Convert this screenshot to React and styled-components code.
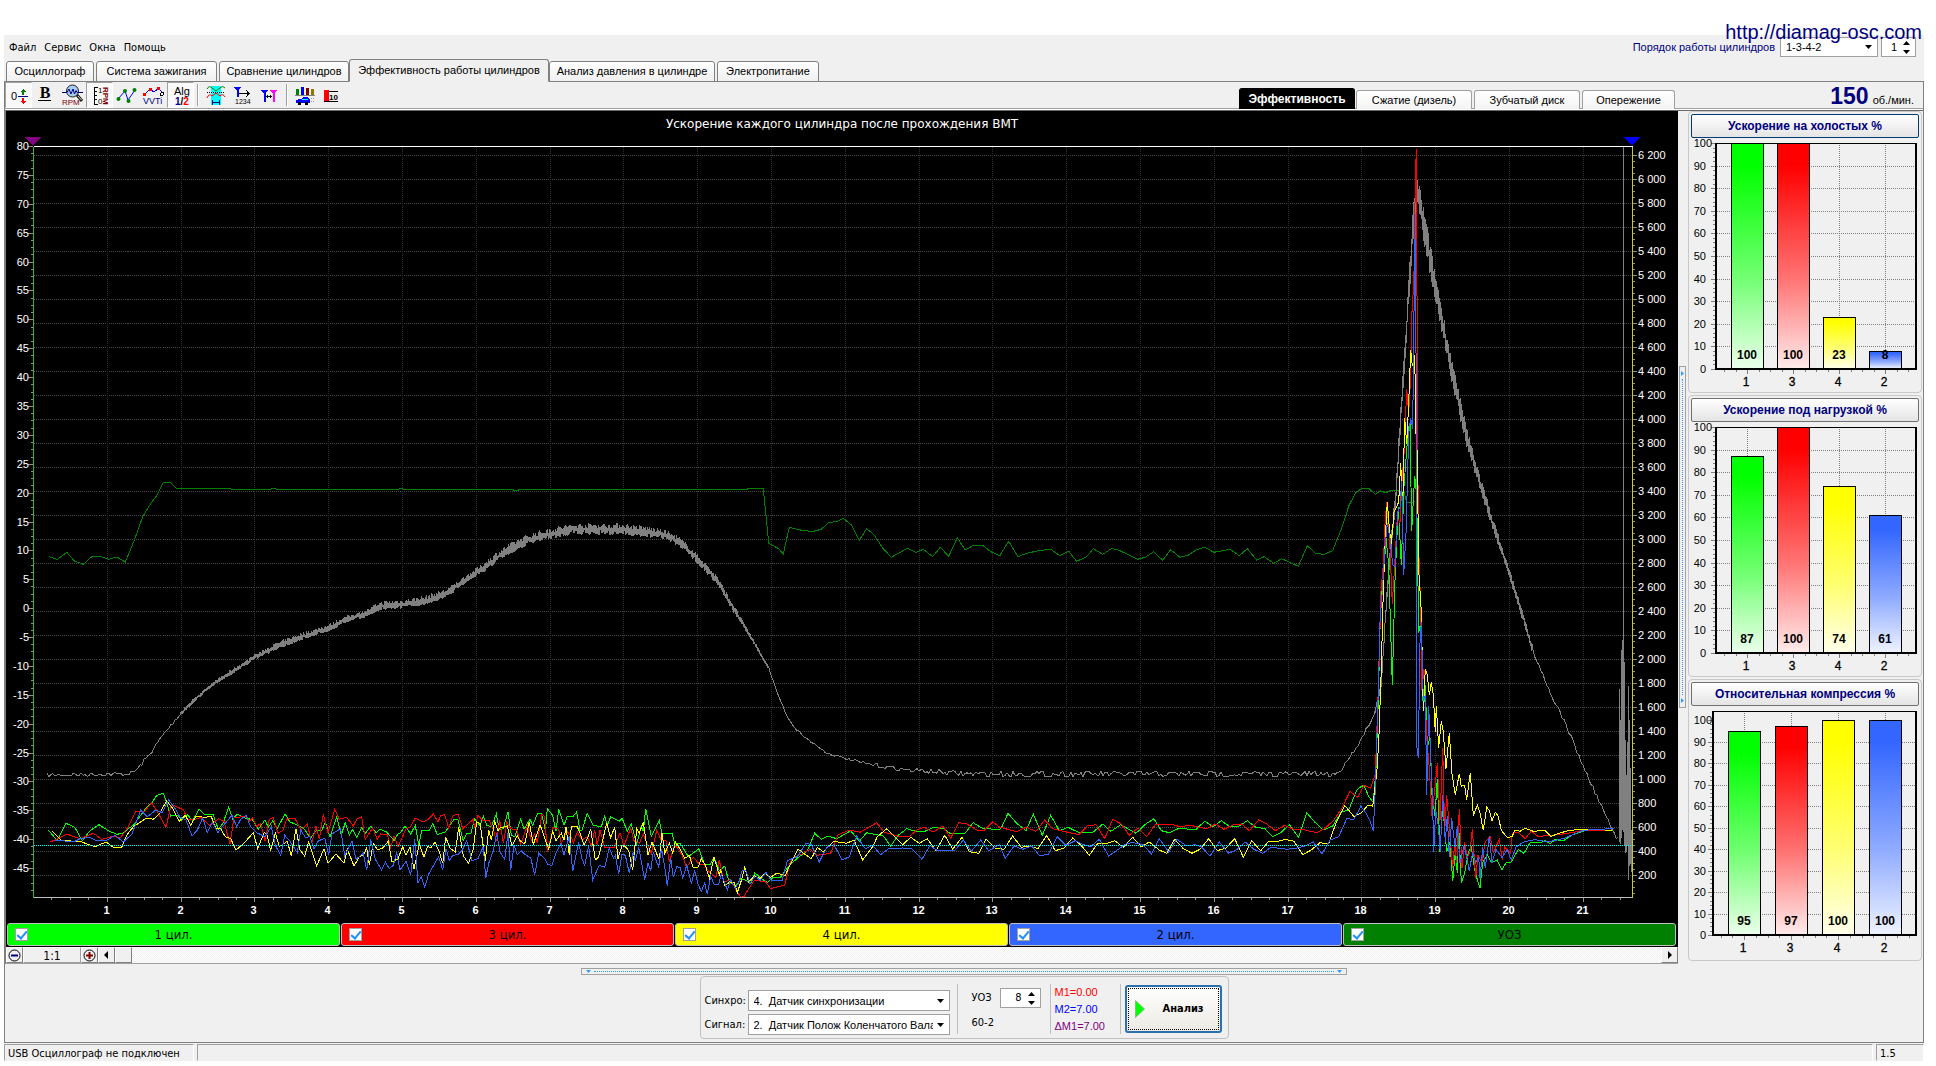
import React from "react";
import styled, { createGlobalStyle, css } from "styled-components";

const sans = `"Liberation Sans", Arial, sans-serif`;
const ui = `"DejaVu Sans Condensed", "DejaVu Sans", sans-serif`;

const GlobalStyle = createGlobalStyle`
  * { box-sizing: border-box; }
  body {
    margin: 0;
    background: #fff;
    color: #000;
    font: 11px/14px ${sans};
  }
  button, input, select { font: inherit; color: inherit; margin: 0; }
`;

const Window = styled.div`
  position: relative;
  margin: 35px 12px 0 4px;
  background: #f0f0f0;
`;

const SiteLink = styled.a`
  position: absolute;
  top: -15px;
  right: 2px;
  z-index: 2;
  color: #000080;
  font-size: 20px;
  line-height: 24px;
  text-decoration: none;
`;

const Header = styled.header`
  display: flex;
  justify-content: space-between;
  height: 47px;
  box-shadow: inset 0 -1px #808080;
`;

const Menu = styled.nav`
  display: flex;
  gap: 8px;
  height: 24px;
  padding: 4px 5px 2px;
  font: 11px/14px ${ui};
`;

const MenuItem = styled.button`
  padding: 0;
  border: 0;
  background: none;
`;

const Tabs = styled.div`
  display: flex;
  align-items: flex-end;
  height: 23px;
  padding-left: 2px;
`;

const Tab = styled.button`
  width: ${(p) => p.$w}px;
  height: ${(p) => (p.$active ? 23 : 21)}px;
  margin-right: ${(p) => (p.$flush ? 0 : 2)}px;
  padding: 0 0 1px;
  white-space: nowrap;
  border: 1px solid #808080;
  border-radius: 3px 3px 0 0;
  background: linear-gradient(#fff, #f0f0f0);
  ${(p) =>
    p.$active &&
    css`
      border-bottom-color: #f0f0f0;
      background: #f0f0f0;
    `}
`;

const OrderBar = styled.div`
  display: flex;
  gap: 3px;
  padding: 2px 8px 0 0;
  color: #000080;
`;

const OrderLabel = styled.label`
  padding: 3px 2px 0 0;
`;

const SelectWrap = styled.span`
  position: relative;
  display: block;
  width: ${(p) => p.$w}px;
  height: ${(p) => p.$h}px;

  select {
    width: 100%;
    height: 100%;
    padding: 0 16px 0 5px;
    border: 1px solid #a0a0a0;
    border-radius: 0;
    background: #fff;
    color: #000;
    appearance: none;
    white-space: pre;
  }
  svg {
    position: absolute;
    right: 6px;
    top: 50%;
    margin-top: -2px;
    color: #000;
    pointer-events: none;
  }
`;

const SpinWrap = styled.span`
  display: flex;
  align-items: center;
  width: ${(p) => p.$w}px;
  height: ${(p) => p.$h}px;
  padding-right: 5px;
  border: 1px solid #a0a0a0;
  background: #fff;

  input {
    flex: 1;
    width: 0;
    padding: 0 6px 0 0;
    border: 0;
    background: none;
    color: #000;
    text-align: right;
    outline: 0;
  }
`;

const Pane = styled.main`
  border: solid #808080;
  border-width: 0 1px 1px;
`;

const Toolbar = styled.div`
  display: flex;
  height: 29px;
  border-bottom: 1px solid #696969;
  box-shadow: inset 0 -1px #fff, inset 0 -2px #a0a0a0;
`;

const Tool = styled.button`
  width: 27px;
  height: 26px;
  padding: 0;
  border: 1px solid transparent;
  background: none;
  line-height: 0;
  ${(p) =>
    p.$on &&
    css`
      border-color: #a0a0a0 #fff #fff #a0a0a0;
      background: #f9f9f9;
    `}
`;

const ToolSep = styled.i`
  width: 2px;
  height: 22px;
  margin: 2px 3px 0;
  border-left: 1px solid #a0a0a0;
  border-right: 1px solid #fff;
`;

const ViewTabs = styled.div`
  display: flex;
  align-items: flex-end;
  height: 27px;
  margin-left: auto;
`;

const ViewTab = styled.button`
  width: ${(p) => p.$w}px;
  height: 19px;
  margin-left: 2px;
  padding: 0;
  border: 1px solid #a0a0a0;
  border-bottom: 0;
  border-radius: 3px 3px 0 0;
  background: linear-gradient(#fff, #f4f4f4);
  ${(p) =>
    p.$active &&
    css`
      height: 21px;
      margin-right: -1px;
      background: #000;
      border-color: #000;
      color: #fff;
      font-size: 12px;
      font-weight: bold;
    `}
`;

const Rpm = styled.div`
  display: flex;
  justify-content: flex-end;
  align-items: baseline;
  gap: 4px;
  width: 248px;
  padding: 2px 9px 0 0;
  font: 11px/24px ${sans};

  strong {
    color: #000080;
    font-size: 23px;
  }
`;

const Body = styled.div`
  display: grid;
  grid-template-columns: minmax(0, 1fr) 9px 236px;
`;

const Scope = styled.section`
  border-left: 1px solid #808080;
  background: #000;
`;

const ChartSvg = styled.svg`
  display: block;
  width: 100%;
  height: auto;
  overflow: visible;
  font-family: ${sans};
`;

const Legend = styled.div`
  display: grid;
  grid-template-columns: repeat(5, 1fr);
  gap: 1px;
  padding: 1px 2px 1px 1px;
`;

const LegendItem = styled.label`
  display: flex;
  align-items: center;
  height: 23px;
  padding-left: 7px;
  border: 1px solid #c0c0c0;
  border-radius: 3px;
  background: ${(p) => p.$color};
  font: 13px/20px ${ui};

  span {
    flex: 1;
    padding-right: 20px;
    text-align: center;
  }
`;

const Check = styled.input`
  appearance: none;
  display: grid;
  place-items: center;
  width: 13px;
  height: 13px;
  border: 1px solid #a0a0a0;
  background: #fff;

  &:checked::after {
    content: "";
    width: 4px;
    height: 8px;
    margin-bottom: 2px;
    border: solid #1e8fff;
    border-width: 0 2px 2px 0;
    transform: rotate(40deg);
  }
`;

const ScrollRow = styled.div`
  display: flex;
  height: 17px;
  border-bottom: 1px solid #a0a0a0;
  background: #f0f0f0;
`;

const ScrollButton = styled.button`
  width: 17px;
  padding: 0;
  border: 1px solid;
  border-color: #fff #808080 #808080 #fff;
  background: #f0f0f0;
  line-height: 0;
`;

const Ratio = styled.output`
  width: 58px;
  border: 1px solid;
  border-color: #fff #a0a0a0 #a0a0a0 #fff;
  text-align: center;
  font: 12px/17px ${ui};
`;

const ScrollTrack = styled.div`
  flex: 1;
  background: repeating-conic-gradient(#f0f0f0 0 25%, #fff 0 50%) 0 0 / 2px 2px;
`;

const Grip = styled.div`
  display: flex;
  align-items: center;
  justify-content: space-between;
  border: 1px solid #a0a0a0;
  color: #3399ff;
  ${(p) =>
    p.$vertical
      ? css`
          flex-direction: column;
          align-self: start;
          width: 7px;
          height: 342px;
          margin: 255px 1px 0;
          padding: 4px 0;
        `
      : css`
          width: 766px;
          height: 7px;
          padding: 0 4px;
        `}

  i {
    flex: 1;
    margin: 3px;
    border: 0 dotted #3399ff;
    ${(p) => (p.$vertical ? "border-left-width: 1px;" : "border-top-width: 1px;")}
  }
`;

const Side = styled.aside`
  display: flex;
  flex-direction: column;
  gap: 2px;
  padding: 0 1px;
`;

const Card = styled.section`
  height: 282px;
  padding: 2px;
  border: 1px solid #c8c8c8;
  border-radius: 4px;
`;

const CardTitle = styled.button`
  display: block;
  width: 100%;
  height: 24px;
  padding: 0;
  border: 1px solid ${(p) => (p.$focus ? "#003c74" : "#707070")};
  border-radius: 2px;
  background: linear-gradient(#fff, #e4e4e4);
  color: #000080;
  font-size: 12px;
  font-weight: bold;
`;

const Bottom = styled.div`
  display: flex;
  flex-direction: column;
  align-items: center;
  gap: 1px;
  padding: 4px 0 3px;
`;

const Controls = styled.div`
  display: flex;
  align-items: flex-start;
  height: 63px;
  padding: 7px 6px 0 4px;
  border: 1px solid #c0c0c0;
  border-radius: 4px;
  font: 11px/14px ${ui};
`;

const Fields = styled.div`
  display: grid;
  grid-template-columns: 42px 202px;
  gap: 3px 1px;
  align-items: center;
  margin-top: 6px;

  select { font: 11px/14px ${sans}; }
`;

const Advance = styled.div`
  display: grid;
  grid-template-columns: 28px 42px;
  gap: 8px 0;
  align-items: center;
  height: 50px;
  margin-left: 7px;
  padding: 4px 8px 4px 14px;
  border-left: 1px solid #c0c0c0;
  border-right: 1px solid #c0c0c0;
`;

const Marks = styled.div`
  height: 50px;
  width: 70px;
  padding: 0 4px;
  border-right: 1px solid #c0c0c0;
  font: 11px/17px ${sans};
`;

const Mark = styled.div`
  color: ${(p) => p.$color};
  white-space: nowrap;
`;

const Analyze = styled.button`
  display: flex;
  align-items: center;
  gap: 18px;
  width: 97px;
  height: 48px;
  margin: 1px 0 0 4px;
  padding: 0 8px;
  border: 2px solid #2a6fae;
  border-radius: 3px;
  outline: 1px dotted #000;
  outline-offset: -4px;
  background: linear-gradient(#fff, #eceae2);
  font: bold 11px/14px ${ui};
`;

const StatusBar = styled.footer`
  display: grid;
  grid-template-columns: 190px 1fr 48px;
  gap: 3px;
  padding-top: 1px;
  font: 11px/15px ${ui};
`;

const StatusCell = styled.div`
  height: 17px;
  padding: 1px 3px;
  border: 1px solid;
  border-color: #a0a0a0 #fff transparent #a0a0a0;
`;

// ---------- traces ----------

// Samples are kept at three units per pixel, in blocks of 1500 units.
const parse = (text, block) =>
  text
    .trim()
    .split(/\s+/)
    .map((p) => p.split(",").map(Number))
    .map(([x, y]) => [x / 3 + block * 500, y / 3 + 460]);

// The acceleration burst has its own, coarser vertical scale.
const parseBurst = (text) =>
  text
    .trim()
    .split(/\s+/)
    .map((p) => p.split(",").map(Number))
    .map(([x, y]) => [x / 3 + 1300, y / 1.912 + 120]);

const join = (a, b, c, burst) => [...parse(a, 0), ...parse(b, 1), ...parse(c, 2), ...parseBurst(burst)];

const cyl1 = join(
  `145,1110 172,1142 198,1090 224,1102 247,1142 270,1112 297,1094 325,1112 350,1123 368,1120 385,1106 402,1094 420,1068 442,1040 456,1028 470,1006 490,1000 498,1022 512,1068 532,1066 545,1080 562,1064 578,1082 597,1048 612,1062 640,1064 655,1108 670,1088 686,1040 698,1078 712,1062 740,1076 757,1078 775,1108 795,1080 805,1102 818,1082 832,1105 855,1062 870,1086 890,1094 910,1104 932,1134 950,1110 965,1112 976,1086 990,1130 1010,1072 1024,1124 1036,1088 1048,1126 1058,1108 1070,1132 1085,1104 1096,1120 1113,1098 1128,1118 1140,1108 1160,1116 1182,1142 1194,1122 1202,1118 1215,1098 1232,1122 1246,1096 1256,1156 1265,1112 1288,1112 1298,1090 1312,1124 1336,1116 1362,1078 1374,1080 1390,1142 1400,1120 1412,1122 1424,1076 1440,1098 1450,1068 1460,1096 1474,1100 1489,1062 1498,1110`,
  `10,1105 24,1056 34,1126 44,1130 62,1078 72,1108 90,1078 98,1096 112,1062 124,1060 134,1100 136,1115 142,1046 158,1066 168,1114 176,1048 192,1096 202,1068 220,1068 230,1056 240,1112 246,1110 262,1060 280,1096 304,1100 314,1068 322,1096 332,1070 360,1084 366,1074 382,1114 394,1092 410,1152 424,1098 430,1114 437,1046 454,1130 478,1082 486,1120 516,1120 524,1150 540,1150 550,1165 565,1190 596,1166 614,1214 632,1212 642,1192 658,1232 674,1218 686,1262 706,1280 722,1256 740,1262 752,1272 764,1238 780,1252 802,1268 820,1252 840,1254 856,1232 872,1212 900,1188 922,1172 944,1120 964,1138 985,1128 1010,1136 1052,1112 1078,1144 1100,1118 1150,1128 1172,1158 1195,1126 1220,1106 1248,1114 1275,1114 1300,1102 1330,1106 1350,1120 1395,1120 1420,1088 1445,1104 1498,1110`,
  `4,1104 24,1060 50,1090 78,1112 100,1062 127,1126 152,1066 178,1112 204,1102 235,1117 280,1116 308,1092 332,1114 362,1094 408,1120 434,1094 462,1076 484,1112 508,1118 535,1106 588,1108 614,1084 640,1100 664,1082 690,1100 715,1100 742,1082 768,1102 795,1106 818,1130 842,1118 868,1094 896,1132 920,1058 944,1086 970,1110 998,1098 1024,1056 1046,1050 1070,990 1080,982`,
  `182,1275 192,1272 205,1292 220,1305 228,1240 235,1110 242,920 250,880 258,800 266,850 277,1080 285,880 295,740 304,850 312,700 325,590 330,580 335,785 344,680 350,720 356,980 362,960 370,1130 376,1080 382,1200 390,1180 396,1290 405,1330 412,1260 420,1400 428,1310 440,1400 450,1380 458,1455 466,1400 472,1440 476,1350 484,1458 494,1440 505,1400 514,1390 526,1440 540,1468 548,1420 562,1405 575,1420 592,1415 606,1434 618,1420 632,1420 655,1395 672,1402 690,1382 720,1382 736,1378 750,1384 765,1376 790,1378 820,1366 860,1358 900,1358 938,1358`
);

const cyl3 = join(
  `150,1146 170,1138 200,1122 240,1136 280,1120 305,1138 335,1130 362,1132 385,1100 408,1054 432,1056 455,1028 475,1060 498,1102 514,1032 532,1042 550,1048 562,1078 580,1080 602,1072 628,1096 656,1076 672,1084 690,1152 702,1074 738,1068 748,1084 758,1074 770,1100 782,1090 795,1142 808,1078 820,1072 834,1120 848,1112 860,1078 884,1074 904,1110 922,1092 935,1150 948,1098 958,1138 970,1062 984,1118 1004,1048 1018,1078 1040,1072 1060,1098 1070,1078 1085,1070 1096,1138 1118,1104 1132,1138 1142,1122 1162,1124 1172,1162 1182,1128 1194,1160 1218,1106 1232,1100 1246,1074 1268,1086 1285,1078 1300,1062 1314,1086 1322,1066 1334,1064 1346,1104 1358,1068 1374,1062 1388,1106 1420,1078 1424,1104 1434,1066 1450,1082 1468,1082 1480,1110 1490,1144 1499,1080`,
  `10,1150 20,1086 32,1106 50,1110 62,1152 82,1098 94,1140 104,1122 112,1148 126,1062 134,1070 142,1176 160,1102 176,1108 184,1152 200,1112 212,1128 220,1148 232,1116 246,1140 262,1130 274,1158 284,1110 292,1156 300,1110 314,1162 342,1164 360,1118 372,1158 392,1104 402,1142 418,1150 430,1122 440,1150 454,1180 470,1112 484,1140 498,1142 508,1205 524,1156 534,1166 546,1185 560,1222 580,1192 600,1214 612,1214 630,1238 648,1252 658,1200 672,1268 690,1258 706,1285 722,1312 732,1310 745,1288 762,1262 795,1264 812,1286 854,1275 870,1208 885,1190 906,1182 930,1168 952,1186 992,1180 1014,1124 1050,1110 1080,1117 1130,1088 1152,1116 1200,1130 1228,1130 1250,1110 1272,1102 1300,1116 1328,1098 1352,1134 1376,1088 1400,1092 1434,1112 1454,1110 1478,1086 1500,1102`,
  `50,1115 78,1102 108,1114 134,1080 158,1106 190,1114 236,1124 262,1098 288,1094 314,1136 338,1078 364,1092 388,1126 414,1104 440,1130 466,1094 518,1094 540,1100 570,1096 620,1106 646,1092 672,1108 700,1094 725,1092 748,1112 776,1080 800,1092 826,1112 854,1096 880,1108 905,1108 950,1118 975,1105 1000,1082 1024,1048 1050,994 1074,1012 1080,1000`,
  `192,1272 212,1278 226,1250 236,1070 243,900 250,850 256,760 261,730 270,820 277,925 284,850 292,760 300,770 306,690 312,640 320,515 326,560 332,490 337,340 341,330 346,120 349,55 352,450 355,800 362,930 366,1090 372,1050 380,1180 388,1240 396,1330 406,1270 412,1230 420,1340 428,1200 434,1360 440,1290 450,1370 458,1430 464,1380 470,1420 478,1318 486,1430 494,1380 502,1410 510,1400 517,1355 527,1450 534,1406 545,1420 556,1380 570,1370 580,1400 598,1376 607,1414 614,1390 632,1402 637,1364 655,1362 676,1374 694,1360 715,1370 780,1366 820,1362 852,1358 930,1358`
);

const cyl4 = join(
  `157,1114 182,1140 245,1146 285,1160 318,1146 340,1162 365,1162 380,1126 400,1100 440,1074 460,1078 478,1062 500,1022 520,1048 538,1084 556,1066 572,1096 588,1068 610,1072 634,1070 648,1106 662,1106 676,1130 692,1136 708,1170 730,1152 760,1118 773,1166 792,1118 800,1120 812,1172 826,1118 838,1160 862,1144 874,1188 888,1106 900,1170 914,1188 926,1146 950,1218 972,1166 984,1210 1008,1182 1032,1210 1042,1168 1062,1218 1078,1190 1090,1186 1100,1164 1108,1215 1120,1150 1132,1168 1146,1166 1165,1144 1176,1206 1194,1196 1208,1160 1218,1186 1230,1162 1242,1228 1258,1152 1272,1192 1282,1160 1294,1162 1305,1146 1318,1176 1328,1210 1337,1132 1350,1164 1366,1176 1376,1102 1390,1188 1406,1210 1420,1166 1430,1086 1440,1090 1456,1202 1466,1110 1474,1140 1484,1084 1494,1112`,
  `0,1104 22,1098 36,1158 52,1126 60,1142 74,1152 88,1086 100,1154 120,1094 146,1168 158,1114 168,1142 184,1120 192,1140 198,1100 208,1185 214,1098 232,1100 240,1120 252,1154 264,1130 272,1106 286,1200 296,1190 320,1090 332,1134 344,1100 354,1196 366,1156 378,1162 386,1172 398,1230 410,1106 418,1120 430,1086 444,1185 456,1146 468,1176 478,1200 486,1118 494,1180 508,1150 518,1180 526,1146 542,1170 554,1195 568,1186 580,1224 594,1222 604,1196 616,1215 628,1255 642,1192 658,1245 662,1230 674,1276 690,1266 702,1266 712,1298 724,1262 734,1222 746,1266 764,1248 780,1256 796,1240 812,1252 830,1240 856,1246 872,1210 894,1168 934,1196 952,1162 970,1176 1002,1144 1040,1150 1062,1140 1088,1200 1118,1160 1132,1130 1160,1106 1185,1132 1208,1154 1232,1132 1258,1150 1282,1136 1308,1172 1334,1126 1358,1168 1386,1132 1408,1175 1436,1180 1458,1138 1485,1164`,
  `12,1168 38,1128 64,1162 90,1158 114,1166 140,1126 166,1172 192,1164 218,1134 245,1158 268,1186 292,1152 322,1150 344,1142 370,1162 398,1132 424,1160 448,1146 478,1170 500,1180 524,1138 550,1166 576,1180 600,1168 626,1136 652,1172 678,1164 704,1136 730,1192 755,1142 782,1172 806,1144 826,1146 856,1138 882,1144 908,1184 934,1170 960,1148 986,1152 1008,1088 1034,1036`,
  `136,1312 162,1332 184,1325 204,1310 218,1312 230,1250 236,1190 244,1050 250,900 256,800 262,730 268,780 274,810 282,750 290,740 296,730 302,655 308,740 314,570 320,620 326,540 332,440 337,470 344,450 348,600 352,640 356,860 364,940 370,1130 376,1050 382,1060 388,1100 394,1075 400,1100 406,1170 409,1120 416,1200 424,1150 430,1170 438,1240 448,1172 456,1250 466,1290 478,1250 484,1274 494,1272 500,1300 511,1248 520,1330 532,1310 540,1325 550,1358 560,1314 568,1320 576,1340 586,1324 594,1330 604,1358 622,1372 636,1370 645,1358 660,1360 676,1354 700,1360 735,1358 753,1370 775,1364 810,1358 860,1356 935,1358`
);

const cyl2 = join(
  `165,1142 225,1144 240,1136 270,1132 290,1142 318,1142 345,1126 370,1146 396,1122 422,1050 442,1070 468,1050 486,1058 506,1020 524,1044 540,1072 558,1080 576,1128 592,1110 608,1074 622,1118 638,1086 654,1118 672,1094 696,1066 710,1100 722,1078 738,1066 752,1100 770,1118 795,1130 814,1100 826,1156 842,1186 854,1126 870,1144 892,1178 902,1110 916,1132 930,1130 942,1166 954,1144 974,1134 986,1184 996,1122 1022,1106 1034,1188 1056,1142 1068,1198 1090,1180 1100,1230 1112,1138 1126,1198 1145,1230 1156,1206 1168,1226 1180,1216 1190,1176 1200,1230 1218,1204 1232,1245 1244,1136 1254,1268 1264,1250 1274,1282 1286,1242 1316,1190 1328,1230 1338,1166 1348,1202 1358,1186 1374,1184 1386,1172 1400,1142 1416,1202 1434,1196 1450,1160 1457,1254 1466,1210 1480,1172 1490,1120 1500,1176`,
  `14,1198 24,1120 32,1230 42,1156 52,1184 64,1172 76,1184 92,1194 104,1244 116,1180 134,1196 144,1214 156,1216 168,1180 182,1150 192,1184 208,1128 218,1234 236,1146 246,1196 254,1216 266,1158 278,1260 298,1216 314,1222 328,1164 340,1194 346,1186 356,1242 366,1182 376,1186 388,1240 400,1176 406,1204 416,1162 434,1260 444,1210 452,1232 460,1176 470,1206 476,1220 484,1166 494,1220 502,1278 512,1194 520,1252 530,1220 540,1222 548,1254 560,1216 574,1270 584,1232 594,1272 604,1294 614,1270 622,1302 632,1248 642,1272 656,1272 664,1242 682,1290 692,1260 706,1284 716,1268 726,1232 738,1232 750,1272 766,1246 780,1262 798,1236 814,1262 846,1262 862,1202 892,1190 918,1150 934,1154 958,1206 980,1162 1002,1154 1026,1200 1048,1190 1070,1128 1096,1166 1118,1156 1142,1184 1166,1166 1208,1164 1235,1166 1266,1198 1290,1156 1312,1172 1364,1172 1390,1140 1414,1174 1442,1140 1466,1172 1498,1154`,
  `4,1168 16,1195 42,1158 68,1168 95,1158 118,1186 145,1184 172,1130 198,1156 225,1142 250,1154 272,1160 298,1138 326,1188 352,1170 380,1150 402,1148 430,1154 454,1182 478,1136 506,1176 530,1138 560,1158 584,1154 604,1160 630,1188 658,1146 686,1180 712,1168 736,1146 762,1168 788,1180 812,1162 862,1168 890,1164 915,1158 940,1146 966,1182 990,1140 1016,1130 1040,1076 1062,1078 1080,1044`,
  `182,1312 198,1325 210,1340 220,1360 226,1280 234,1110 240,960 247,900 255,820 262,770 270,800 278,850 285,855 293,750 300,740 305,690 311,870 318,790 326,600 332,570 338,590 344,250 347,180 349,700 351,1200 355,1220 360,1000 364,960 370,1110 376,1100 380,1290 386,1120 390,1180 398,1310 401,1400 407,1320 415,1350 421,1400 428,1290 436,1380 442,1330 448,1410 455,1335 465,1390 472,1350 480,1420 492,1388 500,1410 508,1436 518,1400 527,1420 536,1410 540,1450 548,1390 556,1430 568,1370 576,1420 588,1395 606,1410 622,1395 634,1415 648,1390 672,1380 705,1376 745,1380 790,1374 850,1358 900,1356 942,1355`
);

const advance = join(
  `148,290 172,298 200,277 224,304 250,313 275,290 304,290 326,298 350,291 376,306 404,238 428,170 450,134 472,104 490,68 512,68 530,86 690,86 695,88 812,88 816,86 826,86 830,88 1196,88 1200,86 1208,86 1212,88 1500,88`,
  `38,88 42,91 54,91 58,88 740,88 745,86 790,86 806,250 836,266 850,282 868,202 910,212 940,214 964,208 985,188 1012,184 1030,175 1055,196 1078,241 1100,206 1122,224 1148,264 1174,292 1222,265 1248,277 1270,268 1298,290 1321,262 1346,289 1372,233 1396,270 1420,256 1448,256 1472,275 1500,287`,
  `2,282 26,244 54,290 80,280 115,272 152,268 180,287 206,274 230,304 260,290 280,266 308,283 336,265 360,272 412,298 436,292 461,275 488,301 512,269 540,292 564,286 588,270 614,262 642,277 690,268 718,287 742,266 770,300 793,290 821,310 845,296 895,319 922,257 946,280 972,283 998,272 1022,212 1048,134 1068,97`,
  `185,705 208,705 226,716 240,709 258,713 272,708 312,710 320,732 345,730`
);

// Engine speed: x, y and the half height of the ripple, all in pixels.
const speedShape = [
  [47, 775, 2], [123, 774, 2], [133, 773, 2], [140, 766, 2], [152, 751, 2], [163, 735, 2], [180, 714, 2],
  [200, 695, 2], [217, 681, 2], [233, 671, 3], [255, 657, 3], [277, 646, 4], [300, 637, 4], [328, 628, 4],
  [347, 619, 4], [367, 613, 4], [380, 606, 5], [403, 604, 5], [427, 600, 5], [447, 593, 5], [467, 578, 4],
  [480, 570, 5], [500, 555, 6], [520, 543, 6], [540, 536, 6], [567, 530, 6], [580, 529, 6], [623, 529, 6],
  [647, 532, 6], [667, 535, 5], [680, 542, 5], [700, 561, 5], [717, 580, 5], [733, 607, 4], [750, 635, 2],
  [769, 669, 1], [777, 692, 1], [787, 716, 1], [795, 728, 1], [807, 739, 1], [827, 753, 1], [847, 759, 1],
  [867, 764, 2], [907, 770, 2], [967, 774, 3], [1333, 774, 3], [1341, 771, 1], [1348, 759, 1], [1360, 742, 2],
  [1367, 727, 2], [1374, 715, 2], [1381, 685, 5], [1387, 590, 9], [1391, 545, 10], [1396, 490, 10], [1400, 425, 12],
  [1405, 350, 14], [1409, 285, 18], [1413, 225, 20], [1416, 198, 18], [1417, 188, 14], [1420, 205, 20],
  [1426, 235, 18], [1433, 273, 16], [1440, 308, 14], [1448, 350, 13], [1458, 398, 12], [1467, 437, 10],
  [1483, 492, 8], [1500, 545, 6], [1517, 596, 5], [1533, 650, 4], [1550, 692, 2], [1567, 727, 2], [1583, 766, 2],
  [1600, 803, 2], [1612, 829, 1], [1616, 840, 3], [1619, 838, 3],
];

function rippled(shape) {
  let seed = 7;
  const rand = () => {
    seed = (seed * 16807) % 2147483647;
    return seed / 2147483647;
  };
  const out = [];
  let sign = 1;
  for (let i = 0; i < shape.length - 1; i++) {
    const [x0, y0, a0] = shape[i];
    const [x1, y1, a1] = shape[i + 1];
    const amp = (a0 + a1) / 2;
    const dense = amp > 3 || (amp > 1 && x0 >= 180 && x0 < 800);
    const step = dense ? 0.5 : 2;
    for (let x = x0; x < x1; x += step) {
      const t = (x - x0) / (x1 - x0);
      const a = a0 + (a1 - a0) * t;
      const wave = dense ? sign * (0.15 + 0.85 * rand()) : 2 * rand() - 1;
      out.push([x, y0 + (y1 - y0) * t + wave * a]);
      sign = -sign;
    }
  }
  return out;
}

const speed = rippled(speedShape);

// Spikes of the speed trace after the engine stops: x, top, bottom.
const stopSpikes = [
  [1619, 689, 842], [1620, 720, 844], [1621, 650, 838], [1622, 640, 830], [1623, 147, 832], [1624, 662, 845],
  [1625, 740, 853], [1626, 775, 852], [1627, 742, 846], [1628, 686, 880], [1629, 720, 866], [1630, 768, 864], [1631, 830, 872],
];

const toPoints = (pts) => pts.map(([x, y]) => `${x.toFixed(1)},${y.toFixed(1)}`).join(" ");
const range = (n) => Array.from({ length: n }, (_, i) => i);
const px = (n) => Math.round(n) + 0.5;

const series = [
  { name: "1 цил.", color: "#00ff00", data: cyl1 },
  { name: "3 цил.", color: "#ff0000", data: cyl3 },
  { name: "4 цил.", color: "#ffff00", data: cyl4 },
  { name: "2 цил.", color: "#3366ff", data: cyl2 },
  { name: "УОЗ", color: "#008000", data: advance },
];

const LEFT = 33.5;
const RIGHT = 1632.5;
const TOP = 146.5;
const BOTTOM = 897.5;
const xAt = (n) => px(33 + 73.8 * n);
const yAt = (v) => px(146 + (80 - v) * 5.777);
const rpmAt = (v) => px(899 - v * 0.12);

function MainChart() {
  const rpms = range(31).map((i) => 200 + i * 200);
  return (
    <ChartSvg viewBox="6 111 1672 811" shapeRendering="crispEdges" role="img" aria-label="Ускорение каждого цилиндра">
      <text x="842" y="128" fill="#fff" fontSize="12" textAnchor="middle" fontFamily="DejaVu Sans">
        Ускорение каждого цилиндра после прохождения ВМТ
      </text>
      <g strokeDasharray="1 1" fill="none">
        {rpms.map((v) => (
          <path key={v} d={`M${LEFT} ${rpmAt(v)}H${RIGHT}`} stroke="#4a4a4a" />
        ))}
        {range(21).map((i) => (
          <path key={i} d={`M${xAt(i + 1)} ${TOP}V${BOTTOM}`} stroke="#303030" />
        ))}
      </g>

      <g fill="none">
        <polyline points={toPoints(advance)} stroke="#008000" />
        <polyline points={toPoints(speed)} stroke="#808080" />
        {stopSpikes.map(([x, a, b]) => (
          <path key={x} d={`M${x + 0.5} ${a}V${b}`} stroke="#808080" />
        ))}
        {series.slice(0, 4).map((s) => (
          <polyline key={s.name} points={toPoints(s.data)} stroke={s.color} />
        ))}
        <path d="M34 845.5H1632" stroke="#00ffff" strokeDasharray="1 1" />
      </g>

      <g stroke="#909090">
        {range(26).map((i) => (
          <path key={i} d={`M28 ${yAt(80 - i * 5)}H33`} />
        ))}
        {range(104).map((i) => (
          <path key={i} d={`M31 ${yAt(80 - i * 1.25)}H33`} />
        ))}
        {range(124).map((i) => (
          <path key={i} d={`M1633 ${rpmAt(50 + i * 50)}H${i % 4 === 3 ? 1637 : 1635}`} />
        ))}
        {range(86).map((i) => (
          <path key={i} d={`M${xAt((i + 1) / 4)} 898V${i % 4 === 3 ? 902 : 900}`} />
        ))}
      </g>
      <path d={`M${LEFT} ${TOP}H${RIGHT}`} stroke="#fff" />
      <path d={`M${LEFT} ${BOTTOM}H${RIGHT}`} stroke="#c0c0c0" />
      <path d={`M${LEFT} ${TOP}V${BOTTOM}`} stroke="#3cb043" />
      <path d={`M${RIGHT} ${TOP}V${BOTTOM}`} stroke="#c8c832" />
      <path d="M25 137H41L33 145.500Z" fill="#800080" />
      <path d="M1624 137H1640L1632 145.500Z" fill="#0000ff" />

      <g fill="#fff" fontSize="11">
        <g textAnchor="end">
          {range(26).map((i) => (
            <text key={i} x="29" y={yAt(80 - i * 5) + 3}>{80 - i * 5}</text>
          ))}
        </g>
        {rpms.map((v) => (
          <text key={v} x="1638" y={rpmAt(v) + 3}>
            {v < 1000 ? v : `${Math.floor(v / 1000)} ${String(v % 1000).padStart(3, "0")}`}
          </text>
        ))}
        <g textAnchor="middle" fontWeight="bold">
          {range(21).map((i) => (
            <text key={i} x={xAt(i + 1) - 1} y="914">{i + 1}</text>
          ))}
        </g>
      </g>
    </ChartSvg>
  );
}

const bars = [
  {
    title: "Ускорение на холостых %",
    left: 24, full: 4, zero: 230, first: 56, pitch: 46,
    values: [100, 100, 23, 8],
  },
  {
    title: "Ускорение под нагрузкой %",
    left: 24, full: 4, zero: 230, first: 56, pitch: 46,
    values: [87, 100, 74, 61],
  },
  {
    title: "Относительная компрессия %",
    left: 21, full: 13, zero: 228, first: 53, pitch: 47,
    values: [95, 97, 100, 100],
  },
];

const barColors = ["#00ff00", "#ff0000", "#ffff00", "#3366ff"];
const barNames = [1, 3, 4, 2];

function BarChart({ id, left, full, zero, first, pitch, values }) {
  const at = (v) => Math.round(zero - ((zero - full) * v) / 100);
  return (
    <ChartSvg viewBox="0 -1 228 252" shapeRendering="crispEdges">
      <defs>
        {barColors.map((c, i) => (
          <linearGradient key={c} id={`${id}-${i}`} x1="0" y1="0" x2="0" y2="1">
            <stop offset="0.1" stopColor={c} />
            <stop offset="0.6" stopColor={c} stopOpacity="0.55" />
            <stop offset="1" stopColor={c} stopOpacity="0.08" />
          </linearGradient>
        ))}
      </defs>
      <g stroke="#808080">
        <g strokeDasharray="1 1">
          {range(9).map((i) => (
            <path key={i} d={`M${left} ${at(i * 10 + 10) + 0.5}H225`} />
          ))}
          {values.map((v, i) => (
            <path key={i} d={`M${first + i * pitch + 0.5} 4V${zero}`} />
          ))}
        </g>
        {range(51).map((i) => (
          <path key={i} d={`M${left - (i % 5 ? 2 : 4)} ${at(i * 2) + 0.5}h4`} />
        ))}
        {range(17).map((i) => (
          <path key={i} d={`M${Math.round(first - pitch / 2 + (i * pitch) / 4) + 0.5} ${zero}v${i % 4 === 2 ? 5 : 3}`} />
        ))}
      </g>
      <path d={`M${left} 4.500H225`} stroke="#000" />
      <path d={`M${left + 1} 4V${zero}M225 4V${zero + 1}M${left} ${zero}H226`} stroke="#000" strokeWidth="2" />
      {values.map((v, i) => {
        const x = first + i * pitch - 16;
        return (
          <g key={i}>
            <rect x={x} y={at(v)} width="33" height={zero - at(v)} fill="#fff" />
            <rect x={x + 0.5} y={at(v) + 0.5} width="32" height={zero - at(v) - 1} fill={`url(#${id}-${i})`} stroke="#000" />
            <text x={x + 16} y={zero - 10} fontSize="12" fontWeight="bold" textAnchor="middle">{v}</text>
            <text x={x + 15} y={zero + 17} fontSize="12" stroke="#000" strokeWidth="0.3" textAnchor="middle">{barNames[i]}</text>
          </g>
        );
      })}
      <g fontSize="11" textAnchor="end">
        {range(11).map((i) => (
          <text key={i} x={i === 10 ? 21 : 15} y={at(i * 10) + 4}>{i * 10}</text>
        ))}
      </g>
    </ChartSvg>
  );
}

// ---------- icons ----------

const Icon = ({ children }) => (
  <svg width="24" height="22" viewBox="0 0 24 22" fill="none" shapeRendering="crispEdges" fontFamily="Liberation Sans">
    {children}
  </svg>
);

const icons = {
  offset: (
    <Icon>
      <text x="4" y="16" fontSize="11" fill="#000">0</text>
      <path d="M11 12.500H21" stroke="#000080" />
      <path d="M16 5L19 8H17V11H15V8H13Z" fill="#008000" />
      <path d="M16 20L19 17H17V14H15V17H13Z" fill="#f00" />
    </Icon>
  ),
  bold: (
    <Icon>
      <text x="11" y="14" fontSize="16" fontWeight="bold" fontFamily="Liberation Serif" textAnchor="middle" fill="#000">B</text>
      <path d="M4 16.500H17" stroke="#000" />
    </Icon>
  ),
  rpmSearch: (
    <Icon>
      <circle cx="11.500" cy="7" r="6" fill="#a6caf0" stroke="#222" shapeRendering="auto" />
      <path d="M1 8.500H6L8 5L10 10L12 5L13.500 10L15 6.500L16 8.500H22" stroke="#000080" shapeRendering="auto" />
      <path d="M16 11L21 17" stroke="#222" strokeWidth="3" shapeRendering="auto" />
      <path d="M17 12L20.500 16" stroke="#d8c890" shapeRendering="auto" />
      <text x="1" y="21" fontSize="8" fill="#800000">RPM</text>
    </Icon>
  ),
  rpmScale: (
    <Icon>
      <path d="M10 3.500H6.500V20.500H10M6 7.500H9M6 11.500H9M6 15.500H9" stroke="#000" />
      <text x="10" y="9" fontSize="8" fill="#000">1</text>
      <text x="10" y="20" fontSize="8" fill="#000">0</text>
      <text transform="translate(15 3) rotate(90)" fontSize="8" fontWeight="bold" fill="#800000">RPM</text>
    </Icon>
  ),
  nodes: (
    <Icon>
      <path d="M3 15L10 7L13 16L20 6" stroke="#00f" shapeRendering="auto" />
      <g fill="#008000" shapeRendering="auto">
        <circle cx="3.500" cy="15" r="2" />
        <circle cx="10" cy="7" r="2" />
        <circle cx="13.500" cy="17" r="2" />
        <circle cx="19.500" cy="6" r="2" />
      </g>
    </Icon>
  ),
  vvti: (
    <Icon>
      <path d="M3 10L8 5L12 8L17 4L20 9" stroke="#00f" />
      <g fill="#f00">
        <path d="M1 9h3v3h-3zM7 4h3v3h-3zM15 3h3v3h-3z" />
      </g>
      <circle cx="20" cy="10" r="1.500" stroke="#000" />
      <text x="1" y="20" fontSize="9" fill="#000080">VVTi</text>
    </Icon>
  ),
  alg: (
    <Icon>
      <text x="5" y="11" fontSize="11" fill="#000">Alg</text>
      <text x="6" y="21" fontSize="10" fontWeight="bold" fill="#000080">
        1<tspan fill="#000">/</tspan>
        <tspan fill="#f00">2</tspan>
      </text>
    </Icon>
  ),
  phase: (
    <Icon>
      <path d="M7 2H17V21H7Z" fill="#0ff" />
      <path d="M3 5Q5 1 8 4L12 7L16 4Q19 1 21 4" stroke="#008000" shapeRendering="auto" />
      <path d="M3 8.500H21" stroke="#000" strokeDasharray="1 1" />
      <path d="M3 14Q5 9 8 12L12 9L16 12Q19 9 21 13" stroke="#f00" shapeRendering="auto" />
      <path d="M8 18.500H16M8.500 16V21M15.500 16V21" stroke="#000080" />
    </Icon>
  ),
  order: (
    <Icon>
      <path d="M3 3H10L7.500 6V13H5.500V6Z" fill="#00f" />
      <path d="M8 9.500H18M15 6L18 9.500L15 13" stroke="#000" />
      <text x="4" y="20" fontSize="7" fill="#000">1234</text>
    </Icon>
  ),
  markers: (
    <Icon>
      <path d="M3 6H10L7.500 9V18H5.500V9Z" fill="#00f" />
      <path d="M12 6H19L16.500 9V18H14.500V9Z" fill="#f0f" />
      <path d="M8 12.500H14M9.500 11V14M12.500 11V14" stroke="#000" />
    </Icon>
  ),
  car: (
    <Icon>
      <path d="M3 5h3v6h-3z" fill="#008000" />
      <path d="M8 3h3v8h-3z" fill="#00f" />
      <path d="M13 4h3v7h-3z" fill="#800000" />
      <path d="M18 5h3v6h-3z" fill="#808000" />
      <path d="M2 11.500H22" stroke="#808080" />
      <path d="M3 17Q4 15 8 15L10 13H14L17 16V19H3Z" fill="#00f" />
      <path d="M9 15.500H15" stroke="#0ff" />
      <path d="M5 18h3v3h-3zM12 18h3v3h-3z" fill="#000" />
      <path d="M18 14.500H22M18 17.500H22" stroke="#a0a0a0" strokeDasharray="1 1" />
    </Icon>
  ),
  level: (
    <Icon>
      <path d="M4 6h5v11h-5z" fill="#f00" />
      <path d="M4 17.500H18M9 7.500H18" stroke="#000" />
      <text x="9" y="16" fontSize="8" fontWeight="bold" fill="#000">10</text>
    </Icon>
  ),
};

const Arrow = ({ dir = "down" }) => {
  const d = { down: "M0 0H7L3.500 4Z", left: "M5 0V8L1 4Z", right: "M2 0V8L6 4Z" }[dir];
  const h = dir === "down" ? 4 : 8;
  return (
    <svg width="7" height={h} viewBox={`0 0 7 ${h}`}>
      <path d={d} fill="currentColor" />
    </svg>
  );
};

const Select = ({ id, w, h, value }) => (
  <SelectWrap $w={w} $h={h}>
    <select id={id} defaultValue={value}>
      <option>{value}</option>
    </select>
    <Arrow />
  </SelectWrap>
);

const Spin = ({ id, label, w, h, value }) => (
  <SpinWrap $w={w} $h={h}>
    <input id={id} aria-label={label} defaultValue={value} />
    <svg width="7" height="13" viewBox="0 0 7 13" fill="#000">
      <path d="M0 4H7L3.500 0ZM0 9H7L3.500 13Z" />
    </svg>
  </SpinWrap>
);

const Zoom = ({ plus }) => (
  <svg width="13" height="13" viewBox="0 0 13 13" fill="none">
    <circle cx="6.500" cy="6.500" r="5.500" stroke="#000" />
    <path d={plus ? "M3 6.500H10M6.500 3V10" : "M3 6.500H10"} stroke={plus ? "#800000" : "#000080"} strokeWidth="2" />
  </svg>
);

const GripMark = ({ vertical }) => (
  <svg width="5" height="5" viewBox="0 0 5 5">
    <path d={vertical ? "M1 0V5L4 2.500Z" : "M0 1H5L2.500 4Z"} fill="currentColor" />
  </svg>
);

const GripBar = ({ vertical }) => (
  <Grip $vertical={vertical}>
    <GripMark vertical={vertical} />
    <i />
    <GripMark vertical={vertical} />
  </Grip>
);

const toolGroups = [
  [["offset", true], ["bold"], ["rpmSearch"], ["rpmScale", true], ["nodes"], ["vvti"], ["alg", true]],
  [["phase"], ["order"], ["markers"]],
  [["car"], ["level"]],
];

export default function App() {
  return (
    <>
      <GlobalStyle />
      <Window>
        <SiteLink href="http://diamag-osc.com">http://diamag-osc.com</SiteLink>
        <Header>
          <div>
            <Menu>
              {["Файл", "Сервис", "Окна", "Помощь"].map((m) => (
                <MenuItem key={m}>{m}</MenuItem>
              ))}
            </Menu>
            <Tabs>
              <Tab $w={88}>Осциллограф</Tab>
              <Tab $w={121}>Система зажигания</Tab>
              <Tab $w={130} $flush>Сравнение цилиндров</Tab>
              <Tab $w={200} $active $flush>Эффективность работы цилиндров</Tab>
              <Tab $w={166}>Анализ давления в цилиндре</Tab>
              <Tab $w={102}>Электропитание</Tab>
            </Tabs>
          </div>
          <OrderBar>
            <OrderLabel htmlFor="order">Порядок работы цилиндров</OrderLabel>
            <Select id="order" w={98} h={20} value="1-3-4-2" />
            <Spin id="first" label="Первый цилиндр" w={35} h={20} value="1" />
          </OrderBar>
        </Header>

        <Pane>
          <Toolbar>
            {toolGroups.map((group, g) => (
              <React.Fragment key={g}>
                {g > 0 && <ToolSep />}
                {group.map(([name, on]) => (
                  <Tool key={name} $on={on} aria-label={name}>{icons[name]}</Tool>
                ))}
              </React.Fragment>
            ))}
            <ViewTabs>
              <ViewTab $w={116} $active>Эффективность</ViewTab>
              <ViewTab $w={116}>Сжатие (дизель)</ViewTab>
              <ViewTab $w={106}>Зубчатый диск</ViewTab>
              <ViewTab $w={93}>Опережение</ViewTab>
            </ViewTabs>
            <Rpm><strong>150</strong> об./мин.</Rpm>
          </Toolbar>

          <Body>
            <Scope>
              <MainChart />
              <Legend>
                {series.map((s) => (
                  <LegendItem key={s.name} $color={s.color}>
                    <Check type="checkbox" defaultChecked />
                    <span>{s.name}</span>
                  </LegendItem>
                ))}
              </Legend>
              <ScrollRow>
                <ScrollButton aria-label="Уменьшить"><Zoom /></ScrollButton>
                <Ratio>1:1</Ratio>
                <ScrollButton aria-label="Увеличить"><Zoom plus /></ScrollButton>
                <ScrollButton aria-label="Назад"><Arrow dir="left" /></ScrollButton>
                <ScrollButton aria-label="Ползунок" />
                <ScrollTrack />
                <ScrollButton aria-label="Вперёд"><Arrow dir="right" /></ScrollButton>
              </ScrollRow>
            </Scope>
            <GripBar vertical />
            <Side>
              {bars.map((b, i) => (
                <Card key={b.title}>
                  <CardTitle $focus={i === 0}>{b.title}</CardTitle>
                  <BarChart id={`bar${i}`} {...b} />
                </Card>
              ))}
            </Side>
          </Body>

          <Bottom>
            <GripBar />
            <Controls>
              <Fields>
                <label htmlFor="sync">Синхро:</label>
                <Select id="sync" w={202} h={21} value={"4.\u00a0 Датчик синхронизации"} />
                <label htmlFor="signal">Сигнал:</label>
                <Select id="signal" w={202} h={21} value={"2.\u00a0 Датчик Полож Коленчатого Вала"} />
              </Fields>
              <Advance>
                <label htmlFor="uoz">УОЗ</label>
                <Spin id="uoz" w={41} h={20} value="8" />
                <span>60-2</span>
              </Advance>
              <Marks>
                <Mark $color="#ff0000">M1=0.00</Mark>
                <Mark $color="#0000ff">M2=7.00</Mark>
                <Mark $color="#800080">ΔM1=7.00</Mark>
              </Marks>
              <Analyze>
                <svg width="10" height="18" viewBox="0 0 10 18">
                  <path d="M0.500 0.500V17.500L9.500 9Z" fill="#00ff00" stroke="#80c080" />
                </svg>
                Анализ
              </Analyze>
            </Controls>
          </Bottom>
        </Pane>

        <StatusBar>
          <StatusCell>USB Осциллограф не подключен</StatusCell>
          <StatusCell />
          <StatusCell>1.5</StatusCell>
        </StatusBar>
      </Window>
    </>
  );
}
